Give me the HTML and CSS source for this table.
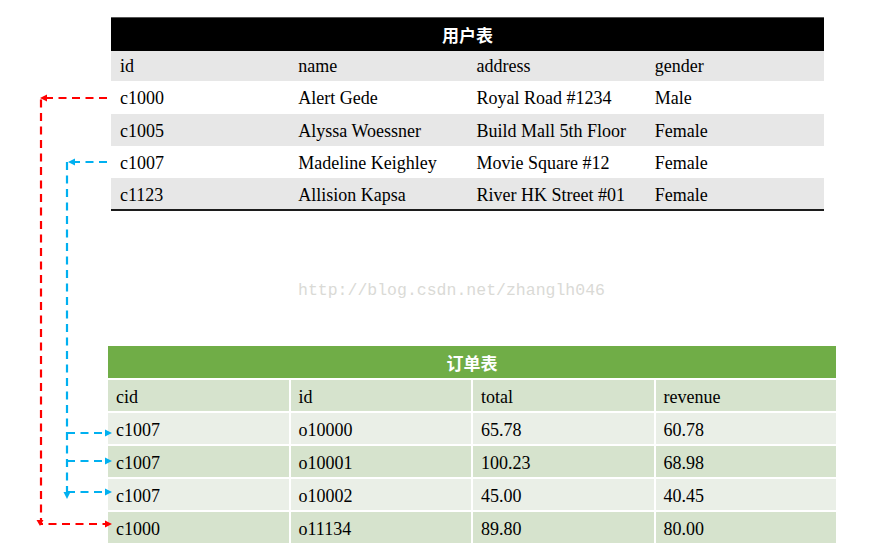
FILE: index.html
```html
<!DOCTYPE html>
<html lang="zh-CN">
<head>
<meta charset="utf-8">
<title>用户表 / 订单表</title>
<link rel="stylesheet" href="styles.css">
</head>
<body>
<div class="page">
  <div class="users">
    <div class="users-title">用户表</div>
    <div class="users-row users-head">
      <div class="cell">id</div><div class="cell">name</div><div class="cell">address</div><div class="cell">gender</div>
    </div>
    <div class="users-row r1">
      <div class="cell">c1000</div><div class="cell">Alert Gede</div><div class="cell">Royal Road #1234</div><div class="cell">Male</div>
    </div>
    <div class="users-row band">
      <div class="cell">c1005</div><div class="cell">Alyssa Woessner</div><div class="cell">Build Mall 5th Floor</div><div class="cell">Female</div>
    </div>
    <div class="users-row">
      <div class="cell">c1007</div><div class="cell">Madeline Keighley</div><div class="cell">Movie Square #12</div><div class="cell">Female</div>
    </div>
    <div class="users-row band last">
      <div class="cell">c1123</div><div class="cell">Allision Kapsa</div><div class="cell">River HK Street #01</div><div class="cell">Female</div>
    </div>
  </div>

  <div class="watermark">http://blog.csdn.net/zhanglh046</div>

  <div class="orders">
    <div class="orders-title">订单表</div>
    <div class="ocell dark">cid</div><div class="ocell dark">id</div><div class="ocell dark">total</div><div class="ocell dark">revenue</div>
    <div class="ocell light">c1007</div><div class="ocell light">o10000</div><div class="ocell light">65.78</div><div class="ocell light">60.78</div>
    <div class="ocell dark">c1007</div><div class="ocell dark">o10001</div><div class="ocell dark">100.23</div><div class="ocell dark">68.98</div>
    <div class="ocell light">c1007</div><div class="ocell light">o10002</div><div class="ocell light">45.00</div><div class="ocell light">40.45</div>
    <div class="ocell dark">c1000</div><div class="ocell dark">o11134</div><div class="ocell dark">89.80</div><div class="ocell dark">80.00</div>
  </div>

  <svg class="links" width="886" height="559" viewBox="0 0 886 559" aria-hidden="true">
    <g class="red">
      <path class="dash" d="M107 98 H41 V524 H106"/>
      <polygon points="40,98 47,94.5 47,101.5"/>
      <polygon points="112,524 105,520.5 105,527.5"/>
      <polygon points="36.5,520 43.5,520 40,526"/>
    </g>
    <g class="blue">
      <path class="dash" d="M107 162 H75"/>
      <path class="dash" d="M67 162 V492"/>
      <path class="dash" d="M67 433 H106"/>
      <path class="dash" d="M67 461 H106"/>
      <path class="dash" d="M67 492 H106"/>
      <polygon points="68,162 75,158.5 75,165.5"/>
      <polygon points="63.5,492 70.5,492 67,499"/>
      <polygon points="112,433 105,429.5 105,436.5"/>
      <polygon points="112,461 105,457.5 105,464.5"/>
      <polygon points="112,492 105,488.5 105,495.5"/>
    </g>
  </svg>
</div>
</body>
</html>
```

FILE: styles.css
```css
* { box-sizing: border-box; }
html, body { margin: 0; padding: 0; background: #fff; }
body {
  font-family: "Liberation Serif", "Times New Roman", serif;
  font-size: 18px;
  color: #000;
}
.page {
  position: relative;
  width: 886px;
  height: 559px;
  padding-top: 17px;
  overflow: hidden;
}

/* 用户表 */
.users {
  margin-left: 111px;
  width: 713px;
  border-bottom: 2px solid #1c1c1c;
}
.users-title {
  height: 34px;
  background: #000;
  border-top: 1px solid #555;
  color: #fff;
  font-family: "Noto Sans CJK SC", sans-serif;
  font-weight: 700;
  font-size: 17px;
  display: flex;
  align-items: center;
  justify-content: center;
}
.users-row {
  display: grid;
  grid-template-columns: repeat(4, 1fr);
  height: 32px;
  align-items: center;
  padding-top: 1px;
  background: #fff;
}
.users-head { height: 30px; background: #e7e7e7; padding-top: 0; }
.users-row.r1 { height: 33px; padding-top: 0; }
.users-row.band { background: #e7e7e7; }
.users-row.last { height: 31px; padding-top: 2px; }
.cell {
  padding-left: 9px;
  white-space: nowrap;
  line-height: 1;
}

/* watermark */
.watermark {
  margin: 70px 0 0 298px;
  height: 20px;
  font-family: "Liberation Mono", monospace;
  font-size: 16.5px;
  line-height: 20px;
  color: #dadad6;
}

/* 订单表 */
.orders {
  margin: 45px 0 0 108px;
  width: 728px;
  display: grid;
  grid-template-columns: repeat(4, 1fr);
  grid-template-rows: 32px repeat(5, 31px);
  gap: 2px;
}
.orders-title {
  grid-column: 1 / -1;
  background: #70ad47;
  color: #fff;
  font-family: "Noto Sans CJK SC", sans-serif;
  font-weight: 700;
  font-size: 17px;
  display: flex;
  align-items: center;
  justify-content: center;
}
.ocell {
  display: flex;
  align-items: center;
  padding: 2px 0 0 8px;
  line-height: 1;
  white-space: nowrap;
}
.ocell.dark { background: #d6e3cd; }
.ocell.light { background: #eaefe7; }

/* connector arrows */
.links {
  position: absolute;
  left: 0;
  top: 0;
  pointer-events: none;
}
.links .dash {
  fill: none;
  stroke-width: 2.2;
  stroke-dasharray: 8 5.5;
}
.red .dash { stroke: #ff0000; }
.red polygon { fill: #ff0000; }
.blue .dash { stroke: #00b0f0; }
.blue polygon { fill: #00b0f0; }
```
